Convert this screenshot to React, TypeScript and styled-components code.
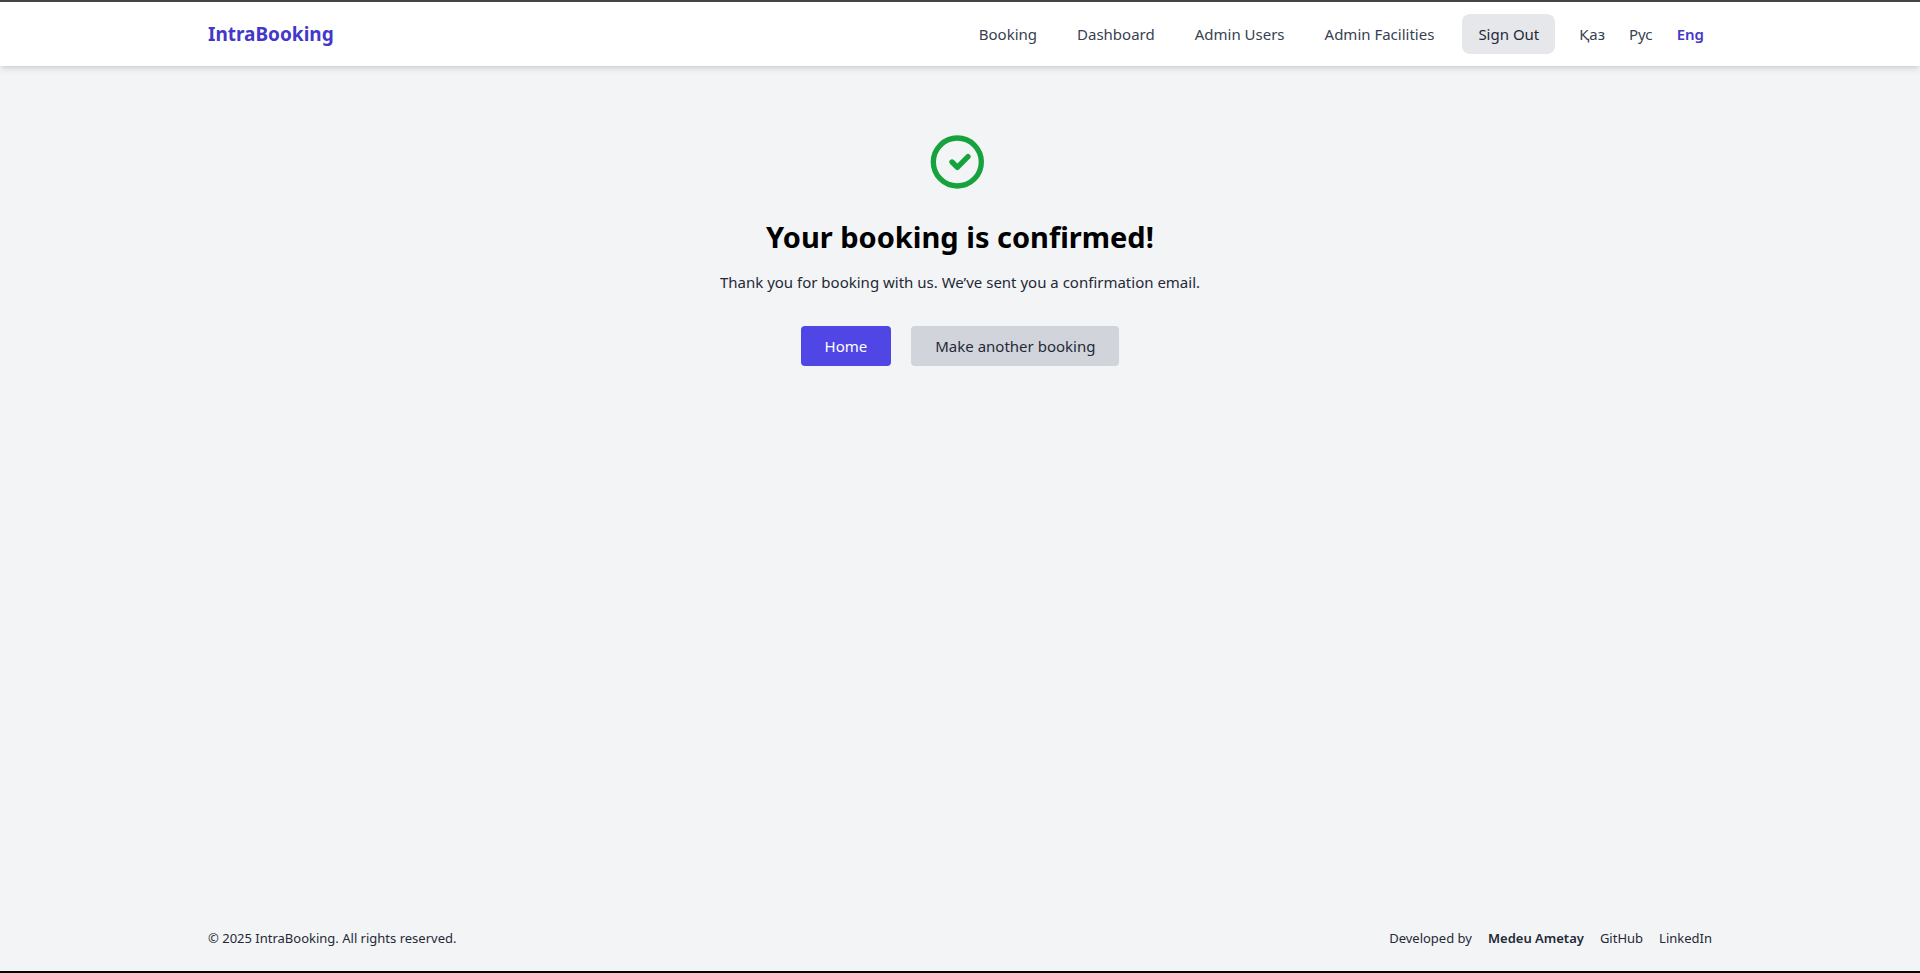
import React from 'react';
import styled, { createGlobalStyle } from 'styled-components';

const GlobalStyle = createGlobalStyle`
  *, *::before, *::after { box-sizing: border-box; }
  body {
    margin: 0;
    background: #f3f4f6;
    color: #1f2937;
    font-family: 'Segoe UI', 'Noto Sans', 'Open Sans', sans-serif;
    font-size: 15px;
    line-height: 24px;
  }
  a { color: inherit; text-decoration: none; }
  button { font: inherit; cursor: pointer; border: 0; }
`;

const Page = styled.div`
  display: flex;
  flex-direction: column;
  min-height: 100vh;
  border-top: 2px solid #464445;
  border-bottom: 2px solid #000;
`;

const Header = styled.header`
  background: #fff;
  box-shadow: 0 4px 6px -1px rgba(0, 0, 0, 0.1), 0 2px 4px -2px rgba(0, 0, 0, 0.1);
`;

const Container = styled.div`
  display: flex;
  align-items: center;
  justify-content: space-between;
  width: 100%;
  max-width: 1536px;
  margin: 0 auto;
  padding: 0 16px;
`;

const HeaderBar = styled(Container)`
  height: 64px;
`;

const Brand = styled.a`
  color: #4338ca;
  font-size: 19px;
  line-height: 28px;
  font-weight: 700;
`;

const Nav = styled.nav`
  display: flex;
  align-items: center;
  gap: 16px;
`;

const NavLink = styled.a`
  padding: 8px 12px;
  color: #374151;
`;

const SignOut = styled.button`
  padding: 8px 16px;
  border-radius: 8px;
  background: #e5e7eb;
  color: #1f2937;
`;

const Languages = styled.div`
  display: flex;
  gap: 8px;
`;

const LanguageButton = styled.button<{ $active?: boolean }>`
  padding: 4px 8px;
  background: transparent;
  color: ${({ $active }) => ($active ? '#4338ca' : '#374151')};
  font-weight: ${({ $active }) => ($active ? 600 : 400)};
`;

const Main = styled.main`
  flex: 1;
  display: flex;
  flex-direction: column;
  align-items: center;
  padding: 64px 16px;
  text-align: center;
`;

const CheckIcon = styled.svg`
  width: 64px;
  height: 64px;
  margin-bottom: 24px;
  color: #16a33d;
`;

const Title = styled.h1`
  margin: 0 0 14px;
  color: #000;
  font-size: 29px;
  line-height: 38px;
  font-weight: 700;
`;

const Message = styled.p`
  margin: 0 0 32px;
`;

const Actions = styled.div`
  display: flex;
  gap: 20px;
`;

const ActionLink = styled.a<{ $primary?: boolean }>`
  padding: 8px 24px;
  border-radius: 4px;
  background: ${({ $primary }) => ($primary ? '#4f46e5' : '#d1d5db')};
  color: ${({ $primary }) => ($primary ? '#fff' : '#1f2937')};
`;

const Footer = styled.footer`
  padding: 24px 0 23px;
  font-size: 13px;
  line-height: 20px;
`;

const Credits = styled.div`
  display: flex;
  gap: 16px;
`;

const Author = styled.span`
  font-weight: 600;
`;

const navItems = ['Booking', 'Dashboard', 'Admin Users', 'Admin Facilities'];
const languages = ['Қаз', 'Рус', 'Eng'];

export default function App() {
  return (
    <>
      <GlobalStyle />
      <Page>
        <Header>
          <HeaderBar>
            <Brand href="#">IntraBooking</Brand>
            <Nav>
              {navItems.map((item) => (
                <NavLink key={item} href="#">{item}</NavLink>
              ))}
              <SignOut type="button">Sign Out</SignOut>
              <Languages>
                {languages.map((lang) => (
                  <LanguageButton key={lang} type="button" $active={lang === 'Eng'}>
                    {lang}
                  </LanguageButton>
                ))}
              </Languages>
            </Nav>
          </HeaderBar>
        </Header>
        <Main>
          <CheckIcon viewBox="0 0 24 24" fill="none" stroke="currentColor" strokeWidth="2" strokeLinecap="round" strokeLinejoin="round" aria-hidden="true">
            <path d="M9 12l2 2l4-4m5 2a9 9 0 11-18 0a9 9 0 0118 0z" />
          </CheckIcon>
          <Title>Your booking is confirmed!</Title>
          <Message>Thank you for booking with us. We’ve sent you a confirmation email.</Message>
          <Actions>
            <ActionLink href="#" $primary>Home</ActionLink>
            <ActionLink href="#">Make another booking</ActionLink>
          </Actions>
        </Main>
        <Footer>
          <Container>
            <span>© 2025 IntraBooking. All rights reserved.</span>
            <Credits>
              <span>Developed by</span>
              <Author>Medeu Ametay</Author>
              <a href="#">GitHub</a>
              <a href="#">LinkedIn</a>
            </Credits>
          </Container>
        </Footer>
      </Page>
    </>
  );
}
